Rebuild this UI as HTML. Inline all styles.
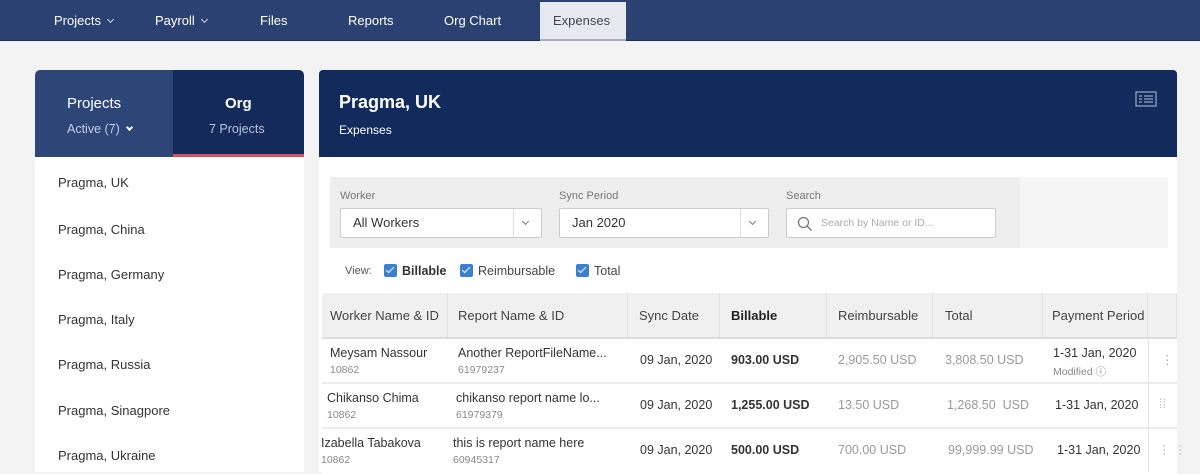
<!DOCTYPE html>
<html><head><style>
*{margin:0;padding:0;box-sizing:border-box}
body{width:1200px;height:472px;overflow:hidden;background:#f3f3f3;font-family:"Liberation Sans",sans-serif;position:relative;color:#333}
.a{position:absolute}
.nav{left:0;top:0;width:1200px;height:41px;background:#2b4172;border-bottom:1px solid #1c2d55}
.nav span{position:absolute;top:13px;color:#fff;font-size:13px}
.chev{display:inline-block;width:5px;height:5px;border-right:1px solid #cfd6e6;border-bottom:1px solid #cfd6e6;transform:rotate(45deg);margin-left:7px;position:relative;top:-3px}
.item{position:absolute;left:58px;font-size:13px;color:#333}
th,td{font-weight:normal}
.hd{position:absolute;top:293px;height:45px;background:#f0f0f0;font-size:13px;color:#444;line-height:45px;border-right:1px solid #e2e2e2}
.cell{position:absolute;font-size:12.5px}
.sub{font-size:10.5px;color:#888;margin-top:4px}
.cb{display:inline-block;width:13px;height:13px;background:#3b7fd4;border-radius:2px;vertical-align:-2px;margin-right:5px;position:relative}
.cb:after{content:"";position:absolute;left:4px;top:1px;width:3px;height:7px;border-right:1.5px solid #fff;border-bottom:1.5px solid #fff;transform:rotate(45deg)}
.sel{position:absolute;top:208px;height:30px;background:#fff;border:1px solid #ccc;border-radius:2px;font-size:13px;line-height:28px;padding-left:12px}
.lbl{position:absolute;top:190px;font-size:11px;color:#777}
.row{position:absolute;left:322px;width:855px;height:45px;background:#fff;border-bottom:2px solid #ececec}
</style></head><body>
<div class="a nav">
<span style="left:54px">Projects<i class="chev"></i></span>
<span style="left:155px">Payroll<i class="chev"></i></span>
<span style="left:260px">Files</span>
<span style="left:348px">Reports</span>
<span style="left:444px">Org Chart</span>
<div class="a" style="left:540px;top:2px;width:86px;height:39px;background:#e6e9ef;border-bottom:2px solid #aab"></div>
<span style="left:553px;color:#445">Expenses</span>
</div>

<div class="a" style="left:35px;top:70px;width:269px;height:402px;background:#fff;border-radius:5px 5px 0 0;overflow:hidden">
<div class="a" style="left:0;top:0;width:138px;height:87px;background:#2d4577"></div>
<div class="a" style="left:138px;top:0;width:131px;height:87px;background:#132a5b;border-bottom:3px solid #d8525c"></div>
<div class="a" style="left:32px;top:25px;color:#fff;font-size:15px">Projects</div>
<div class="a" style="left:32px;top:52px;color:#c5cde0;font-size:12.5px">Active (7)<i class="chev" style="border-color:#fff;border-width:0 2px 2px 0"></i></div>
<div class="a" style="left:190px;top:25px;color:#fff;font-size:15px;font-weight:bold">Org</div>
<div class="a" style="left:174px;top:52px;color:#b8c2da;font-size:12.5px">7 Projects</div>
</div>
<div class="item" style="top:175px">Pragma, UK</div>
<div class="item" style="top:222px">Pragma, China</div>
<div class="item" style="top:267px">Pragma, Germany</div>
<div class="item" style="top:312px">Pragma, Italy</div>
<div class="item" style="top:357px">Pragma, Russia</div>
<div class="item" style="top:403px">Pragma, Sinagpore</div>
<div class="item" style="top:448px">Pragma, Ukraine</div>

<div class="a" style="left:319px;top:70px;width:858px;height:87px;background:#122a5c;border-radius:4px 4px 0 0"></div>
<div class="a" style="left:339px;top:92px;color:#fff;font-size:18px;font-weight:bold">Pragma, UK</div>
<div class="a" style="left:339px;top:123px;color:#fff;font-size:12px">Expenses</div>
<svg class="a" style="left:1135px;top:91px" width="22" height="16"><rect x="1" y="1" width="20" height="14" fill="none" stroke="#b8c2da"/><path d="M4 5h3M4 8h3M4 11h3M9 5h9M9 8h9M9 11h9" stroke="#b8c2da"/></svg>

<div class="a" style="left:319px;top:157px;width:858px;height:315px;background:#fff"></div>
<div class="a" style="left:330px;top:177px;width:838px;height:71px;background:#f5f5f5"></div>
<div class="a" style="left:330px;top:177px;width:690px;height:71px;background:#eeeeee"></div>
<div class="lbl" style="left:340px">Worker</div>
<div class="lbl" style="left:559px">Sync Period</div>
<div class="lbl" style="left:786px">Search</div>
<div class="sel" style="left:340px;width:202px">All Workers<div class="a" style="right:0;top:0;width:28px;height:28px;border-left:1px solid #ddd"><i class="chev" style="position:absolute;left:9px;top:10px;margin:0;border-color:#777"></i></div></div>
<div class="sel" style="left:559px;width:210px">Jan 2020<div class="a" style="right:0;top:0;width:28px;height:28px;border-left:1px solid #ddd"><i class="chev" style="position:absolute;left:9px;top:10px;margin:0;border-color:#777"></i></div></div>
<div class="sel" style="left:786px;width:210px;padding-left:34px;font-size:10.5px;color:#aaa">Search by Name or ID...
<svg class="a" style="left:10px;top:7px" width="16" height="16"><circle cx="6.5" cy="6.5" r="5" fill="none" stroke="#777" stroke-width="1.3"/><path d="M10 10l4.5 4.5" stroke="#777" stroke-width="1.3"/></svg></div>
<div class="a" style="left:345px;top:265px;font-size:11px;color:#555">View:</div>
<div class="a" style="left:384px;top:264px;font-size:12.5px"><i class="cb"></i><b>Billable</b></div>
<div class="a" style="left:460px;top:264px;font-size:12.5px;color:#444"><i class="cb"></i>Reimbursable</div>
<div class="a" style="left:576px;top:264px;font-size:12.5px;color:#444"><i class="cb"></i>Total</div>

<div class="hd" style="left:322px;width:126px;padding-left:8px">Worker Name &amp; ID</div>
<div class="hd" style="left:448px;width:180px;padding-left:10px">Report Name &amp; ID</div>
<div class="hd" style="left:628px;width:92px;padding-left:11px">Sync Date</div>
<div class="hd" style="left:720px;width:107px;padding-left:11px;font-weight:bold;color:#222">Billable</div>
<div class="hd" style="left:827px;width:106px;padding-left:11px">Reimbursable</div>
<div class="hd" style="left:933px;width:110px;padding-left:12px">Total</div>
<div class="hd" style="left:1043px;width:105px;padding-left:9px">Payment Period</div>
<div class="hd" style="left:1148px;width:29px"></div>
<div class="a" style="left:322px;top:337px;width:855px;height:2px;background:#ddd"></div>

<div class="row" style="top:339px"></div>
<div class="row" style="top:384px"></div>
<div class="row" style="top:429px;border:none"></div>
<div class="a" style="left:1148px;top:339px;width:1px;height:133px;background:#e4e4e4"></div>

<div class="cell" style="left:330px;top:346px">Meysam Nassour<div class="sub">10862</div></div>
<div class="cell" style="left:458px;top:346px">Another ReportFileName...<div class="sub">61979237</div></div>
<div class="cell" style="left:640px;top:353px">09 Jan, 2020</div>
<div class="cell" style="left:731px;top:353px;font-weight:bold">903.00 USD</div>
<div class="cell" style="left:838px;top:353px;color:#999">2,905.50 USD</div>
<div class="cell" style="left:945px;top:353px;color:#999">3,808.50 USD</div>
<div class="cell" style="left:1053px;top:346px">1-31 Jan, 2020<div class="sub">Modified &#9432;</div></div>
<div class="cell" style="left:1161px;top:352px;color:#aaa">&#8942;</div>

<div class="cell" style="left:327px;top:391px">Chikanso Chima<div class="sub">10862</div></div>
<div class="cell" style="left:456px;top:391px">chikanso report name lo...<div class="sub">61979379</div></div>
<div class="cell" style="left:640px;top:398px">09 Jan, 2020</div>
<div class="cell" style="left:731px;top:398px;font-weight:bold">1,255.00 USD</div>
<div class="cell" style="left:838px;top:398px;color:#999">13.50 USD</div>
<div class="cell" style="left:947px;top:398px;color:#999">1,268.50 &nbsp;USD</div>
<div class="cell" style="left:1055px;top:398px">1-31 Jan, 2020</div>
<div class="cell" style="left:1159px;top:397px;color:#bbb">&#8286;&#8286;</div>

<div class="cell" style="left:321px;top:436px">Izabella Tabakova<div class="sub">10862</div></div>
<div class="cell" style="left:453px;top:436px">this is report name here<div class="sub">60945317</div></div>
<div class="cell" style="left:640px;top:443px">09 Jan, 2020</div>
<div class="cell" style="left:731px;top:443px;font-weight:bold">500.00 USD</div>
<div class="cell" style="left:838px;top:443px;color:#999">700.00 USD</div>
<div class="cell" style="left:948px;top:443px;color:#999">99,999.99 USD</div>
<div class="cell" style="left:1057px;top:443px">1-31 Jan, 2020</div>
<div class="cell" style="left:1158px;top:442px;color:#bbb">&#8942; &#8942;</div>
</body></html>
